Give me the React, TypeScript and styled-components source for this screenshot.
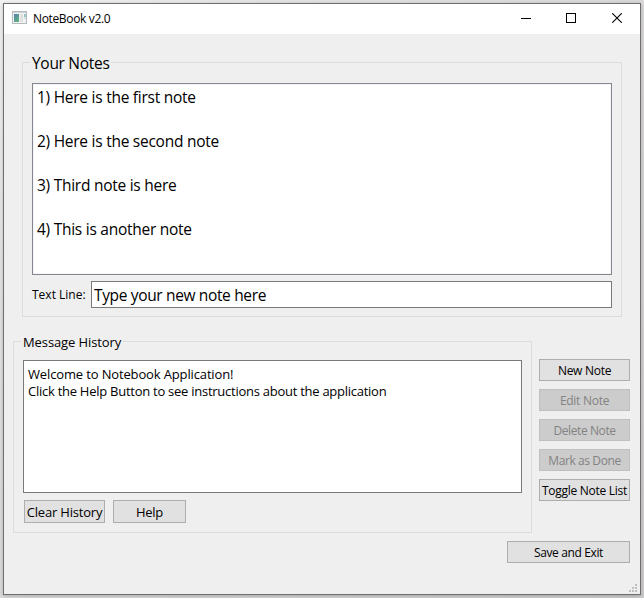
import React from 'react';
import styled, { createGlobalStyle } from 'styled-components';

const GlobalStyle = createGlobalStyle`
  * { box-sizing: border-box; }
  body { margin: 0; background: #d3d1d1; overflow: hidden; }
  button, input, textarea { font: inherit; letter-spacing: inherit; margin: 0; border-radius: 0; }
`;

const Desktop = styled.div`
  width: 644px;
  height: 598px;
  padding: 3px;
  background: linear-gradient(135deg, #f2f2f2 0, #e2e2e2 25%, #d8d6d6 60%, #cecccc 100%);
  font-family: 'Open Sans', 'Noto Sans', sans-serif;
  font-size: 12px;
  color: #000;
`;

const Window = styled.main`
  display: flex;
  flex-direction: column;
  width: 638px;
  height: 592px;
  border: 1px solid #6e6e6e;
  background: #efefef;
  box-shadow: 0 1px 4px rgba(0, 0, 0, 0.22);
`;

const TitleBar = styled.header`
  display: flex;
  align-items: center;
  flex: none;
  height: 30px;
  padding-left: 8px;
  background: #fff;
`;

const IconBox = styled.span`
  display: flex;
  padding-bottom: 3px;
`;

const Title = styled.h1`
  flex: 1;
  margin: 0 0 0 6px;
  font-size: 12px;
  font-weight: 400;
  line-height: 30px;
  letter-spacing: -0.35px;
`;

const WindowButton = styled.button<{ $nudge?: number }>`
  display: flex;
  align-items: center;
  justify-content: center;
  width: 46px;
  height: 30px;
  padding: 0 0 2px ${(p) => p.$nudge ?? 0}px;
  border: 0;
  background: transparent;
`;

const Content = styled.div`
  display: flex;
  flex-direction: column;
  flex: 1;
  padding: 20px 10px 0 9px;
`;

const Group = styled.fieldset<{ $height: number }>`
  display: flex;
  flex-direction: column;
  min-width: 0;
  height: ${(p) => p.$height}px;
  margin: 0;
  padding: 0 9px;
  border: 1px solid #dcdcdc;
`;

const Legend = styled.legend<{ $large?: boolean }>`
  height: 17px;
  margin-left: -2px;
  padding: 0 2px;
  font-size: ${(p) => (p.$large ? 15.5 : 13)}px;
  line-height: ${(p) => (p.$large ? 19 : 18)}px;
  letter-spacing: ${(p) => (p.$large ? -0.3 : -0.1)}px;
  white-space: nowrap;
`;

const NotesSection = styled.section`
  margin: 0 8px 0 9px;
`;

const NoteList = styled.ul`
  height: 192px;
  margin: 12px 0 6px;
  padding: 2px 4px;
  list-style: none;
  border: 1px solid #828790;
  box-shadow: inset 0 0 0 1px #f5f5f5;
  background: #fff;
  font-size: 15.5px;
  letter-spacing: -0.26px;
`;

const NoteItem = styled.li`
  height: 44px;
  line-height: 22px;
`;

const InputRow = styled.label`
  display: flex;
  align-items: center;
  gap: 6px;
  height: 27px;
`;

const InputLabel = styled.span`
  width: 53px;
  white-space: nowrap;
`;

const NoteInput = styled.input`
  flex: 1;
  min-width: 0;
  height: 27px;
  padding: 1px 2px 0;
  border: 1px solid #7a7a7a;
  background: #fff;
  color: #000;
  outline: 0;

  && {
    font-size: 15.5px;
    letter-spacing: -0.35px;
  }
`;

const LowerArea = styled.section`
  display: grid;
  grid-template-columns: 519px 91px;
  column-gap: 7px;
  margin-top: 16px;
`;

const History = styled.div`
  height: 133px;
  margin: 10px 0 7px;
  padding: 5px 4px;
  border: 1px solid #7a7a7a;
  background: #fff;
  font-size: 13px;
  line-height: 17px;
  white-space: nowrap;
`;

const HistoryLine = styled.p<{ $spacing: number }>`
  margin: 0;
  letter-spacing: ${(p) => p.$spacing}px;
`;

const HistoryActions = styled.div`
  display: flex;
  gap: 8px;
  padding-left: 1px;
`;

const ActionStack = styled.div`
  display: flex;
  flex-direction: column;
  gap: 8px;
  padding-top: 26px;
`;

const Button = styled.button<{ $width: number; $height?: number; $size?: number; $spacing?: number }>`
  width: ${(p) => p.$width}px;
  height: ${(p) => p.$height ?? 22}px;
  padding: 1px 0 0;
  border: 1px solid #adadad;
  background: #e1e1e1;
  color: #000;
  white-space: nowrap;

  && {
    font-size: ${(p) => p.$size ?? 12}px;
    line-height: 18px;
    letter-spacing: ${(p) => p.$spacing ?? -0.28}px;
  }

  &:disabled {
    border-color: #bfbfbf;
    background: #cccccc;
    color: #838383;
  }
`;

const Footer = styled.footer`
  display: flex;
  justify-content: flex-end;
  margin-top: 8px;
`;

const GripRow = styled.div`
  display: flex;
  flex: none;
  justify-content: flex-end;
  height: 10px;
  padding-right: 3px;
`;

const notes = ['Here is the first note', 'Here is the second note', 'Third note is here', 'This is another note'];

function AppIcon() {
  return (
    <svg width="15" height="13" viewBox="0 0 15 13" shapeRendering="crispEdges">
      <defs>
        <linearGradient id="pane" x1="0" y1="0" x2="0.6" y2="1">
          <stop offset="0" stopColor="#5585b0" />
          <stop offset="1" stopColor="#5fae80" />
        </linearGradient>
      </defs>
      <rect width="15" height="13" fill="#b4b9bc" />
      <rect x="1" y="1" width="13" height="1" fill="#d0d4d7" />
      <rect x="1" y="2" width="13" height="10" fill="#f2f2f2" />
      <rect x="2" y="3" width="5" height="8" fill="url(#pane)" />
      <rect x="8" y="3" width="3" height="8" fill="#e0e0e0" />
      <rect x="12" y="3" width="2" height="3" fill="#9cc0cc" />
      <rect x="12" y="6" width="2" height="2" fill="#d3e4dc" />
    </svg>
  );
}

export default function App() {
  return (
    <>
      <GlobalStyle />
      <Desktop>
        <Window>
          <TitleBar>
            <IconBox><AppIcon /></IconBox>
            <Title>NoteBook v2.0</Title>
            <WindowButton aria-label="Minimize" $nudge={2}>
              <svg width="10" height="10" shapeRendering="crispEdges"><path d="M0 5.5H10" stroke="#000" /></svg>
            </WindowButton>
            <WindowButton aria-label="Maximize">
              <svg width="10" height="10" shapeRendering="crispEdges"><rect x=".5" y=".5" width="9" height="9" fill="none" stroke="#000" /></svg>
            </WindowButton>
            <WindowButton aria-label="Close">
              <svg width="10" height="10"><path d="M.2 .2L9.8 9.8M9.8 .2L.2 9.8" stroke="#000" strokeWidth="1.1" /></svg>
            </WindowButton>
          </TitleBar>
          <Content>
            <NotesSection>
              <Group $height={263}>
                <Legend $large>Your Notes</Legend>
                <NoteList>
                  {notes.map((note, i) => <NoteItem key={note}>{i + 1}) {note}</NoteItem>)}
                </NoteList>
                <InputRow>
                  <InputLabel>Text Line:</InputLabel>
                  <NoteInput defaultValue="Type your new note here" />
                </InputRow>
              </Group>
            </NotesSection>
            <LowerArea>
              <Group $height={200}>
                <Legend>Message History</Legend>
                <History>
                  <HistoryLine $spacing={-0.14}>Welcome to Notebook Application!</HistoryLine>
                  <HistoryLine $spacing={-0.26}>Click the Help Button to see instructions about the application</HistoryLine>
                </History>
                <HistoryActions>
                  <Button $width={81} $height={23} $size={13} $spacing={-0.2}>Clear History</Button>
                  <Button $width={73} $height={23} $size={13} $spacing={-0.3}>Help</Button>
                </HistoryActions>
              </Group>
              <ActionStack>
                <Button $width={91}>New Note</Button>
                <Button $width={91} disabled>Edit Note</Button>
                <Button $width={91} disabled $spacing={-0.4}>Delete Note</Button>
                <Button $width={91} disabled $spacing={-0.4}>Mark as Done</Button>
                <Button $width={91}>Toggle Note List</Button>
              </ActionStack>
            </LowerArea>
            <Footer>
              <Button $width={123} $spacing={-0.37}>Save and Exit</Button>
            </Footer>
          </Content>
          <GripRow>
            <svg width="8" height="8" fill="#bfbfbf" shapeRendering="crispEdges">
              <path d="M0 6h2v2H0zM3 6h2v2H3zM6 6h2v2H6zM3 3h2v2H3zM6 3h2v2H6zM6 0h2v2H6z" />
            </svg>
          </GripRow>
        </Window>
      </Desktop>
    </>
  );
}
